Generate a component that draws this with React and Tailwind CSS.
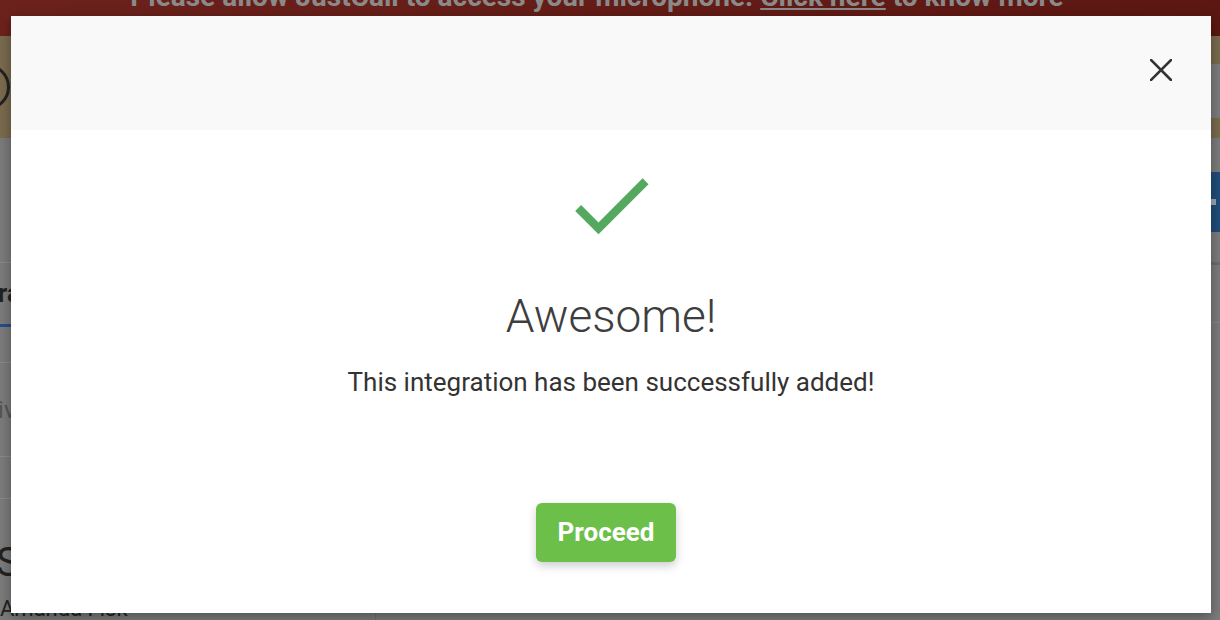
import React from "react";

function CheckIcon() {
  return (
    <svg width="100" height="100" viewBox="0 0 24 24" className="block">
      <path fill="#54a95f" d="M9 16.17L4.83 12l-1.42 1.41L9 19 21 7l-1.41-1.41z" />
    </svg>
  );
}

function CloseIcon() {
  return (
    <svg width="22" height="22" viewBox="0 0 22 22" className="block">
      <path d="M1 1 L21 21 M21 1 L1 21" stroke="#333" strokeWidth="2.6" strokeLinecap="square" />
    </svg>
  );
}

function Background() {
  return (
    <div className="flex flex-col w-full h-full">
      <div className="h-[36px] bg-gradient-to-r from-[#6c221c] to-[#5c1712] flex justify-center overflow-hidden shrink-0">
        <div className="-mt-[20px] text-[28px] font-bold text-[#8a8a8a] leading-[34px] whitespace-nowrap -ml-[26px]">
          Please allow JustCall to access your microphone. <span className="underline">Click here</span> to know more
        </div>
      </div>
      <div className="h-[102px] bg-[#7a6a4e] flex justify-between shrink-0">
        <div className="w-[46px] h-[46px] rounded-full border-[3px] border-[#222] -ml-[36px] mt-[28px]" />
        <div className="w-[70px] h-[54px] bg-[#7c7c7c] mt-[28px] flex items-center pl-[40px] text-[22px] font-bold text-[#3a2c0e]">
          w
        </div>
      </div>
      <div className="flex flex-1">
        <div className="w-[376px] border-r border-[#6f6f6f] flex flex-col">
          <div className="h-[124px]" />
          <div className="border-t border-[#8a8a8a] h-[62px] flex items-center text-[26px] font-bold text-[#222] whitespace-nowrap">
            <span className="-ml-[62px]">Integrations</span>
          </div>
          <div className="h-[3px] bg-[#284c8c] w-[200px]" />
          <div className="h-[35px]" />
          <div className="border-t border-[#8a8a8a] h-[94px] flex items-center text-[24px] text-[#555] whitespace-nowrap">
            <span className="-ml-[38px]">Active</span>
          </div>
          <div className="border-t border-[#8a8a8a] h-[42px]" />
          <div className="border-t border-[#8a8a8a] h-[40px]" />
          <div className="text-[40px] text-[#222] leading-[50px] -ml-[4px]">S</div>
          <div className="text-[22px] text-[#222] leading-[26px] mt-[8px]">Amanda Fisk</div>
        </div>
        <div className="flex-1 flex flex-col">
          <div className="h-[34px]" />
          <div className="h-[60px] bg-[#1f4d79] w-[120px] self-end flex items-center justify-end pr-[4px]">
            <div className="w-[10px] h-[6px] bg-[#9aa6b3]" />
          </div>
          <div className="h-[30px]" />
          <div className="border-t-[3px] border-[#6c6c6c] h-[60px]" />
          <div className="border-t border-[#868686]" />
        </div>
      </div>
    </div>
  );
}

export default function App() {
  return (
    <div className="relative w-[1220px] h-[620px] overflow-hidden bg-[#7b7b7b] font-['Roboto',_'Liberation_Sans',_sans-serif]">
      <Background />
      <div className="absolute inset-0 flex justify-start items-start pt-[16px] pl-[11px]">
        <div className="w-[1200px] h-[597px] bg-white shadow-[0_4px_12px_rgba(0,0,0,0.35)] flex flex-col">
          <div className="h-[114px] bg-[#f9f9f9] flex justify-end items-start pt-[43px] pr-[39px] shrink-0">
            <CloseIcon />
          </div>
          <div className="flex flex-col items-center">
            <div className="mt-[25px]">
              <CheckIcon />
            </div>
            <div className="mt-[34px] text-[46px] leading-[55px] font-light text-[#3e3e3e]">Awesome!</div>
            <div className="mt-[23px] text-[26px] leading-[30px] text-[#333]">
              This integration has been successfully added!
            </div>
            <button className="mt-[106px] mr-[10px] w-[140px] h-[59px] rounded-[6px] bg-[#6cc04a] text-white text-[26px] font-bold shadow-[0_4px_10px_rgba(0,0,0,0.2)]">
              Proceed
            </button>
          </div>
        </div>
      </div>
    </div>
  );
}
